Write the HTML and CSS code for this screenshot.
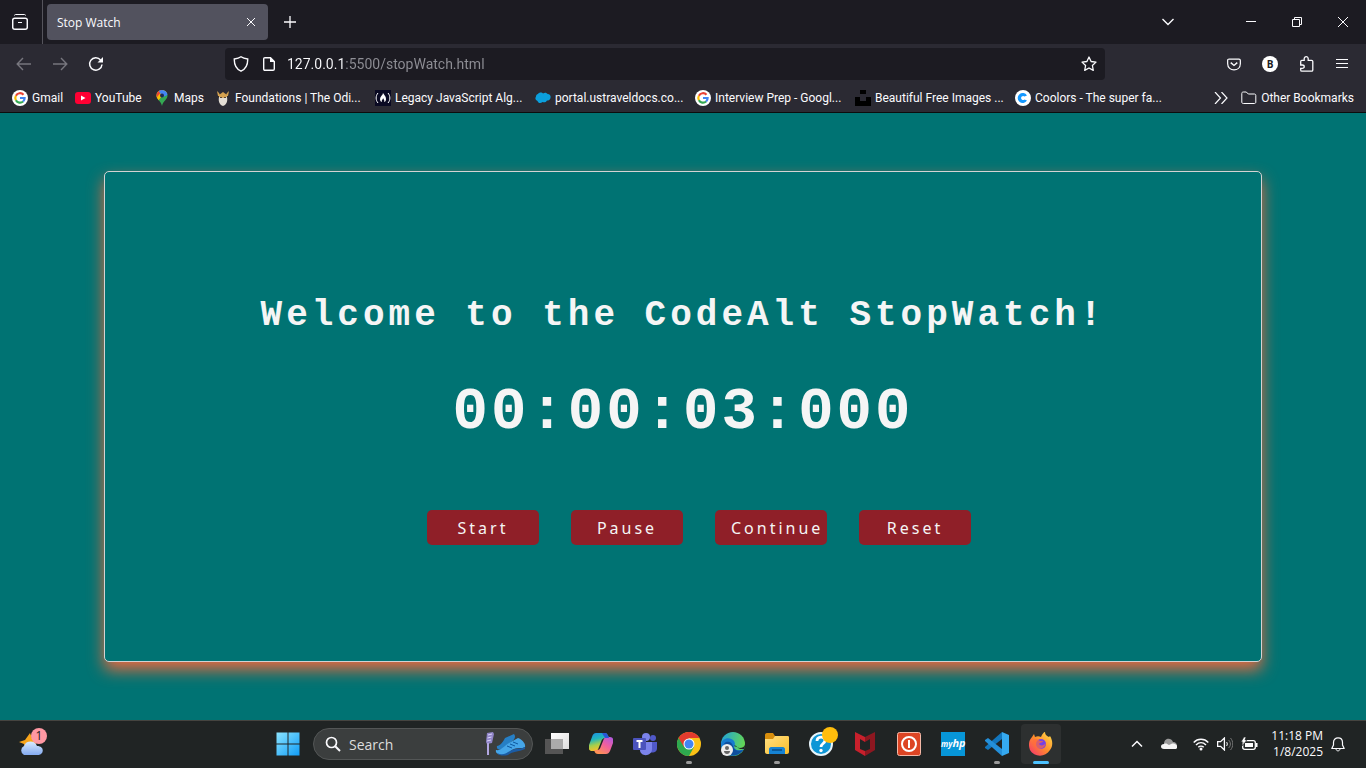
FILE: index.html
```html
<!DOCTYPE html>
<html lang="en">
<head>
<meta charset="utf-8">
<title>Stop Watch</title>
<link rel="stylesheet" href="styles.css">
</head>
<body>
<div class="screen">
  <header class="browser">
    <div class="tabbar">
      <button class="history-btn" aria-label="Recent browsing"><svg width="16" height="16" viewBox="0 0 16 16" class="line"><path d="M2.500 1.500c0-.7.5-1 1-1h9c.5 0 1 .3 1 1"/><rect x="0.7" y="4.200" width="14.600" height="11" rx="2" stroke-width="1.500"/><path d="M6 8.500h4"/></svg></button>
      <div class="tab"><span class="tab-title">Stop Watch</span><button class="tab-close" aria-label="Close tab"><svg width="10" height="10" viewBox="0 0 10 10" class="line"><path d="M1 1l8 8M9 1l-8 8"/></svg></button></div>
      <button class="cell" aria-label="New tab"><svg width="12" height="12" viewBox="0 0 12 12" class="line"><path d="M6 0v12M0 6h12" stroke-width="1.300"/></svg></button>
      <div class="window-controls">
        <button class="cell list-tabs" aria-label="List all tabs"><svg width="12" height="8" viewBox="0 0 12 8" class="line"><path d="M.5 1L6 6.500 11.500 1" stroke-width="1.400"/></svg></button>
        <button class="win-btn" aria-label="Minimize"><svg width="10" height="10" viewBox="0 0 10 10" class="line"><path d="M0 4.500h10"/></svg></button>
        <button class="win-btn" aria-label="Restore"><svg width="10" height="10" viewBox="0 0 10 10" class="line"><path d="M.5 2.500h7v7h-7zM2.500 2.500v-2h7v7h-2"/></svg></button>
        <button class="win-btn" aria-label="Close"><svg width="10" height="10" viewBox="0 0 10 10" class="line"><path d="M0 0l10 10M10 0L0 10"/></svg></button>
      </div>
    </div>
    <nav class="toolbar">
      <button class="cell dim" aria-label="Back"><svg width="16" height="14" viewBox="0 0 16 14" class="line"><path d="M15 7H1.500M7 1L1.200 7 7 13" stroke-width="1.400"/></svg></button>
      <button class="cell dim" aria-label="Forward"><svg width="16" height="14" viewBox="0 0 16 14" class="line"><path d="M1 7h13.500M9 1l5.800 6L9 13" stroke-width="1.400"/></svg></button>
      <button class="cell" aria-label="Reload"><svg width="16" height="16" viewBox="0 0 16 16" class="line"><path d="M14 8.500A6.200 6.200 0 1 1 12.600 4" stroke-width="1.500"/><path d="M15 1v5.500H9.500z" fill="currentColor" stroke="none"/></svg></button>
      <div class="urlbar">
        <svg width="16" height="16" viewBox="0 0 16 16" class="line"><path d="M8 .8c2 1.600 4.200 2 6.700 2.200.2 5.600-1.700 10-6.700 12.200C3 13 1.100 8.600 1.300 3 3.800 2.800 6 2.400 8 .8z" stroke-width="1.400"/></svg>
        <svg width="12" height="14" viewBox="0 0 12 14" class="line"><path d="M2 .7h5.500l3.800 3.800V12c0 .8-.4 1.300-1.300 1.300H2c-.9 0-1.300-.5-1.300-1.300V2C.7 1.200 1.100.7 2 .7z" stroke-width="1.400"/><path d="M7 0l5 5H7z" fill="currentColor" stroke="none"/></svg>
        <input class="url" type="text" aria-label="Address" value="127.0.0.1:5500/stopWatch.html">
        <button class="star" aria-label="Bookmark this page"><svg width="16" height="16" viewBox="0 0 16 16" class="line"><path d="M8 1l2.100 4.500 4.900.6-3.600 3.400.9 4.900L8 12l-4.300 2.400.9-4.900L1 6.100l4.900-.6z" stroke-width="1.300" stroke-linejoin="round"/></svg></button>
      </div>
      <button class="cell" aria-label="Save to Pocket"><svg width="14" height="13" viewBox="0 0 15 13" class="line"><path d="M2.200.7h10.600c.9 0 1.500.5 1.500 1.400v3.600c0 8.800-13.600 8.800-13.600 0V2.100C.7 1.200 1.300.7 2.200.7z" stroke-width="1.300"/><path d="M4 4.500l3.500 3 3.500-3" stroke-width="1.500"/></svg></button>
      <button class="cell" aria-label="Account"><span class="avatar">B</span></button>
      <button class="cell" aria-label="Extensions"><svg width="15" height="16" viewBox="0 0 15 16" class="line"><path d="M1.700 9V5.600c0-.8.300-1.200 1.100-1.200h2.400V2.800c0-2.800 4-2.800 4 0v1.600h3.400c.8 0 1.200.4 1.200 1.200V14c0 .8-.4 1.200-1.200 1.200H2.800c-.8 0-1.100-.4-1.100-1.200v-1.600h1.500c2.700 0 2.700-3.400 0-3.400z" stroke-width="1.300"/></svg></button>
      <button class="cell" aria-label="Menu"><svg width="12" height="12" viewBox="0 0 12 12" class="line"><path d="M0 1.500h12M0 5.500h12M0 9.500h12" stroke-width="1.200"/></svg></button>
    </nav>
    <nav class="bookmarks">
      <a class="bm gmail" href="#"><svg width="16" height="16" viewBox="0 0 16 16"><use href="#google"/></svg>Gmail</a>
      <a class="bm youtube" href="#"><svg width="16" height="16" viewBox="0 0 16 16"><rect y="2" width="16" height="12" rx="3" fill="#f03"/><path d="M6 5.500v5L10.500 8z" fill="#fff"/></svg>YouTube</a>
      <a class="bm maps" href="#"><svg width="16" height="16" viewBox="0 0 16 16"><clipPath id="pin"><path d="M8 0a5.500 5.500 0 0 1 5.500 5.500C13.500 9.500 9 11 8 16 7 11 2.500 9.500 2.500 5.500A5.500 5.500 0 0 1 8 0z"/></clipPath><g clip-path="url(#pin)"><path d="M0 0h16v16H0z" fill="#34a853"/><path d="M0 0h16L8 6 4 11H0z" fill="#fbbc04"/><path d="M0 0h9L3 7H0z" fill="#ea4335"/><path d="M4 0h12v4L9 7 6 3z" fill="#4285f4"/></g><circle cx="8" cy="5.500" r="2" fill="#202b50"/></svg>Maps</a>
      <a class="bm" href="#"><svg width="16" height="16" viewBox="0 0 16 16"><path d="M2 1l1 5 10 0 1-5-2 2-1 2H5L4 3z" fill="#d5a250"/><path d="M4 5l4-3 4 3v5H4z" fill="#d5a250"/><path d="M4 7l4 1 4-1c1 5-1 8-4 9-3-1-5-4-4-9z" fill="#e3ddd4"/><path d="M5 7h2v1H5zM9 7h2v1H9z" fill="#574536"/></svg>Foundations | The Odi...</a>
      <a class="bm" href="#"><svg width="16" height="16" viewBox="0 0 16 16"><path fill="#0a0a23" d="M0 0h16v16H0z"/><path d="M3 3C.5 6 .5 10 3 13M13 3c2.500 3 2.500 7 0 10" fill="none" stroke="#fff"/><path d="M8 3c0 2-3 3.500-3 6 0 2 1 3 2 3-1-2 1-2 1-4 1 2 2 3 1 4 1.500 0 2-1.500 2-3 0-3-2-4-3-6z" fill="#fff"/></svg>Legacy JavaScript Alg...</a>
      <a class="bm" href="#"><svg width="16" height="16" viewBox="0 0 16 16"><path d="M3 4c1-2 4-2 5-.5C10 2 12 3 12.500 4 15 4 16 6 15.500 8c-.5 2-2 2.500-3.500 2.500-1 2-3 2-4.500 1.500-2 2-4.500 1-5-1C0 10 0 8 1 6.500 1 5 2 4 3 4z" fill="#0b9fdd"/></svg>portal.ustraveldocs.co...</a>
      <a class="bm" href="#"><svg width="16" height="16" viewBox="0 0 16 16"><use href="#google"/></svg>Interview Prep - Googl...</a>
      <a class="bm" href="#"><svg width="16" height="16" viewBox="0 0 16 16"><path d="M5 0h6v4H5zM0 7h5v4h6V7h5v9H0z"/></svg>Beautiful Free Images ...</a>
      <a class="bm" href="#"><svg width="16" height="16" viewBox="0 0 16 16"><circle cx="8" cy="8" r="8" fill="#fff"/><path d="M12 5.500A5 5 0 1 0 12 10.500L9.500 9.500A2 2 0 1 1 9.500 6.500z" fill="#1498ff"/></svg>Coolors - The super fa...</a>
      <button class="more" aria-label="More bookmarks"><svg width="14" height="12" viewBox="0 0 14 12" class="line"><path d="M1 0l5.500 6L1 12M7.500 0L13 6l-5.500 6" stroke-width="1.200"/></svg></button>
      <a class="bm other" href="#"><svg width="16" height="16" viewBox="0 0 16 16" class="line"><path d="M.8 3.500c0-1 .5-1.500 1.500-1.500h3l2 2h6c1 0 1.500.5 1.500 1.500V12c0 1-.5 1.500-1.500 1.500h-11c-1 0-1.500-.5-1.500-1.500z"/></svg>Other Bookmarks</a>
    </nav>
  </header>

  <main class="page">
    <section class="card">
      <h1 class="heading">Welcome to the CodeAlt StopWatch!</h1>
      <div class="time">00:00:03:000</div>
      <div class="buttons">
        <button class="btn">Start</button>
        <button class="btn">Pause</button>
        <button class="btn">Continue</button>
        <button class="btn">Reset</button>
      </div>
    </section>
  </main>

  <footer class="taskbar">
    <div class="widgets"><button class="weather" aria-label="Weather"><svg width="24" height="24" viewBox="0 0 24 24"><path d="M11 1l2 5 6 1-4 8H6l-1-3-5-2 6-2z" fill="#f8a51b"/><path d="M5 23a5 5 0 0 1 0-9 7 7 0 0 1 13 0c8 0 7 9 1 9z" fill="url(#cloud)"/></svg><span class="badge">1</span></button></div>
    <button class="task" aria-label="Start menu"><svg width="24" height="24" viewBox="0 0 24 24"><path d="M.5.500h11v11H.5zM12.500.500h11v11h-11zM.5 12.500h11v11H.5zM12.500 12.500h11v11h-11z" fill="url(#win)"/></svg></button>
    <div class="search">
      <svg width="16" height="16" viewBox="0 0 16 16" class="line"><circle cx="6.500" cy="6.500" r="5" stroke-width="1.700"/><path d="M10.200 10.200L15 15" stroke-width="2"/></svg>
      <input class="search-input" type="text" aria-label="Search" placeholder="Search">
      <svg width="42" height="24" viewBox="0 0 42 24"><path d="M3 1l6-1 1 2-2 9-5 1-1-2z" fill="#9186c8"/><path d="M4 3l4-1M3.500 6l4-1M3 9l4-1" stroke="#d9d2fa"/><path d="M4 11v12" stroke="#b3a8e2" stroke-width="2"/><path d="M13 14c3 0 6-4 8-8l9-4c2 2 1 6-3 8l-7 6c-3 3-8 2-7-2z" fill="#267fc5"/><path d="M12 18c5 1 8-4 13-7l9-5c4 1 8 6 7 9-3 2-7 0-11 2-4 1-6 6-11 6-4 0-8-2-7-5z" fill="#45a6e9"/><path d="M13 21c8 4 12-3 18-4 4-1 7 0 10-2v2c-7 3-12 2-17 6-4 1-9 1-11-2z" fill="#1b5ca5"/><path d="M23 14l5 2M26 12l5 2M29 10l5 2" stroke="#0c589e"/></svg>
    </div>
    <button class="task" aria-label="Task view"><svg width="24" height="24" viewBox="0 0 24 24"><path d="M6 1h18v16H6z" fill="url(#view)"/><path d="M0 7h18v15H0z" fill="#555"/><path d="M6 7h12v10H6z" fill="#aaa"/></svg></button>
    <button class="task" aria-label="Copilot"><svg width="24" height="24" viewBox="0 0 24 24"><path d="M7 1h9c2 0 3 2 4 5h-4c-2 0-3 1-4 4l-2 5c-1 3-2 4-4 4H3c-3 0-4-3-3-6l3-8c1-3 2-4 4-4z" fill="url(#cop1)"/><path d="M17 22H9c-2 0-3-1-4-4h3c2 0 3-1 4-4l2-5c1-3 2-4 4-4h3c3 0 4 3 3 6l-3 8c-1 2-2 3-4 3z" fill="url(#cop2)"/><path d="M13 1h3c2 0 3 2 4 5h-4z" fill="#2b56d8"/></svg></button>
    <button class="task" aria-label="Teams"><svg width="24" height="24" viewBox="0 0 24 24"><circle cx="13" cy="5" r="4" fill="#7b83eb"/><circle cx="20" cy="6" r="3" fill="#5059c9"/><path d="M17 10h7v6c0 5-5 5-7 4z" fill="#5059c9"/><path d="M7 10h12v7c0 8-12 8-12 1z" fill="#7b83eb"/><rect y="6" width="13" height="12" rx="1" fill="#4b53bc"/><path d="M3.500 9h6M6.500 9v7" stroke="#fff" stroke-width="2"/></svg></button>
    <button class="task open" aria-label="Chrome"><svg width="24" height="24" viewBox="0 0 24 24"><circle cx="12" cy="12" r="12" fill="#fbc116"/><path d="M12 12L1.600 6A12 12 0 0 0 12 24l5-9z" fill="#2da94f"/><path d="M1.600 6A12 12 0 0 1 22.400 6H12L7 15z" fill="#e33b2e"/><circle cx="12" cy="12" r="5.500" fill="#fff"/><circle cx="12" cy="12" r="4.500" fill="#4285f4"/></svg></button>
    <button class="task" aria-label="Edge"><svg width="24" height="24" viewBox="0 0 24 24"><circle cx="12" cy="12" r="12" fill="url(#edge)"/><path d="M0 12C1 6 9 4 13 9c2 3 0 6 0 6 1 4 6 4 10 2-4 7-12 8-17 5C2 20 0 16 0 12z" fill="#167bd0"/><path d="M12 14c-1-4-4-5-7-4-4 2-3 9 2 13 8 2 13-2 15-5-5 2-9 0-10-4z" fill="#0f4f9e"/><path d="M13 14c3-2 2 4 10 3 1-2 1-3 1-4-1 3-6 4-8 2z" fill="#202625"/><circle cx="6" cy="18" r="6" fill="#eee"/><circle cx="6" cy="16" r="2" fill="#666"/><path d="M3 19h6c0 4-6 4-6 0z" fill="#666"/></svg></button>
    <button class="task open" aria-label="File Explorer"><svg width="24" height="24" viewBox="0 0 24 24"><path d="M0 3c0-1 .5-2 2-2h6l2 3v6H0z" fill="#d88e0c"/><path d="M0 7h8l2-3h13c1 0 1 1 1 2v14c0 1-1 2-2 2H2c-1 0-2-1-2-2z" fill="url(#folder)"/><path d="M4 22v-5c0-1 1-2 2-2h12c1 0 2 1 2 2v5z" fill="#1683d4"/><path d="M7 18h10" stroke="#0b5a9b" stroke-width="2"/></svg></button>
    <button class="task" aria-label="Get Help"><svg width="24" height="24" viewBox="0 0 24 24"><circle cx="12" cy="12" r="11" fill="#0e96d6" stroke="#e8f5fb" stroke-width="2"/><path d="M8 9c0-5 8-5 8-.5 0 3-4 3-4 6.500" fill="none" stroke="#fff" stroke-width="2.800"/><circle cx="12" cy="18.500" r="1.700" fill="#fff"/></svg><span class="dot"></span></button>
    <button class="task" aria-label="McAfee"><svg width="24" height="24" viewBox="0 0 24 24"><path d="M2 0l10 5v5L7 7v10l5 2v5L2 18z" fill="#c8202c"/><path d="M22 0L12 5v5l5-3v10l-5 2v5l10-6z" fill="#8d1720"/></svg></button>
    <button class="task" aria-label="Power"><svg width="24" height="24" viewBox="0 0 24 24"><rect x=".5" y=".5" width="23" height="23" rx="2" fill="#dd4524" stroke="#f4b9a8"/><circle cx="12" cy="12" r="7" fill="none" stroke="#fff" stroke-width="2"/><path d="M12 8v8" stroke="#fff" stroke-width="2"/></svg></button>
    <button class="task" aria-label="myHP"><span class="myhp"><span class="my">my</span>hp</span></button>
    <button class="task open" aria-label="Visual Studio Code"><svg width="24" height="24" viewBox="0 0 24 24"><path d="M17 0v7L3 18l-3-2v-1z" fill="#1276bd"/><path d="M17 24v-7L3 6 0 8v1z" fill="#2490da"/><path d="M17 0l7 3v18l-7 3z" fill="#35a9ef"/></svg></button>
    <button class="task open active" aria-label="Firefox"><svg width="24" height="24" viewBox="0 0 24 24"><path d="M3 5l2-3 1 3c2-1 4-1 6 0 1-3 3-5 4-5 0 3 2 4 4 5l1-1c3 5 3 10 0 14-5 8-16 7-20 0C-1 13 0 8 3 5z" fill="url(#fox)"/><circle cx="12" cy="12" r="5" fill="#7542e5"/><path d="M4 8c3-2 5-1 7 1h3c0 2-3 1-4 3 1 2 5 2 7-1-1 5-6 7-10 5-3-2-4-4-3-8z" fill="#ff6b3d" opacity=".7"/></svg></button>
    <div class="tray">
      <button class="tray-btn" aria-label="Show hidden icons"><svg width="12" height="8" viewBox="0 0 12 8" class="line"><path d="M1 6.500l5-5 5 5" stroke-width="1.500"/></svg></button>
      <button class="tray-btn" aria-label="OneDrive"><svg width="16" height="12" viewBox="0 0 16 12"><path d="M3 6c0-6 7-7 9-2 3 0 4 2 4 4L8 9z" fill="#999"/><path d="M3 11c-4 0-4-5 0-5 2-1 3 0 5 1 2-1 4-2 6-1 3 1 3 5 0 5z" fill="#f5f5f5"/></svg></button>
      <button class="status" aria-label="Network, volume and battery">
        <svg width="16" height="13" viewBox="0 0 16 13" class="line"><path d="M.7 4.500c4-4.200 10.600-4.200 14.600 0M3 7c3-3 7-3 10 0M5.300 9.300c1.500-1.500 3.900-1.500 5.400 0" stroke-width="1.500"/><circle cx="8" cy="11" r="1.500" fill="currentColor" stroke="none"/></svg>
        <svg width="16" height="14" viewBox="0 0 16 14" class="line"><path d="M.6 4.600h3L7.400 1v12L3.600 9.400h-3z" stroke-width="1.300"/><path d="M9.500 5c1 1 1 3 0 4"/><path d="M11.500 3c2.500 2 2.500 6 0 8M13.500 1c3 3.500 3 8.500 0 12" stroke="#777"/></svg>
        <svg width="17" height="14" viewBox="0 0 17 14"><rect x="1.700" y="3.700" width="12.600" height="8.600" rx="2" fill="none" stroke="#fff" stroke-width="1.300"/><path d="M4 6h8v4H4zM15 6h1.500v4H15z" fill="#fff"/><path d="M3 0L0 5h2l-1 4 5-6H4l1-3z" fill="#fff" stroke="#202424" stroke-width=".6"/></svg>
      </button>
      <button class="clock"><span>11:18 PM</span><span>1/8/2025</span></button>
      <button class="bell" aria-label="Notifications"><svg width="14" height="15" viewBox="0 0 14 15" class="line"><path d="M2.500 8V5.500c0-6.300 9-6.300 9 0V8l1.700 3.500H.8z" stroke-width="1.200" stroke-linejoin="round"/><path d="M5 12c.3 2.500 3.700 2.500 4 0"/></svg></button>
    </div>
  </footer>
</div>
<svg class="defs" width="0" height="0" aria-hidden="true">
  <defs>
    <symbol id="google" viewBox="0 0 16 16"><circle cx="8" cy="8" r="8" fill="#fff"/><g fill="none" stroke-width="2.200"><path d="M11.500 4.700A4.700 4.700 0 0 0 3.900 5.700" stroke="#ea4335"/><path d="M3.900 5.700a4.700 4.700 0 0 0 0 4.600" stroke="#fbbc05"/><path d="M3.900 10.300a4.700 4.700 0 0 0 7.200 1.200" stroke="#34a853"/><path d="M11.100 11.500A4.700 4.700 0 0 0 12.600 8H8" stroke="#4285f4"/></g></symbol>
    <linearGradient id="win" x2="1" y2="1"><stop stop-color="#8be4ff"/><stop offset="1" stop-color="#109cf6"/></linearGradient>
    <linearGradient id="cloud" x2="0" y2="1"><stop stop-color="#d8eaff"/><stop offset="1" stop-color="#83aaf0"/></linearGradient>
    <linearGradient id="view" x2="1" y2="1"><stop stop-color="#fff"/><stop offset="1" stop-color="#ddd"/></linearGradient>
    <linearGradient id="cop1" x2=".3" y2="1"><stop stop-color="#1b8de8"/><stop offset=".4" stop-color="#21b6bb"/><stop offset=".7" stop-color="#a6cf4b"/><stop offset="1" stop-color="#f8c02a"/></linearGradient>
    <linearGradient id="cop2" x1="1" x2=".3" y2="1"><stop stop-color="#a95ae9"/><stop offset=".5" stop-color="#ef5f9f"/><stop offset="1" stop-color="#ff9253"/></linearGradient>
    <linearGradient id="edge" x2="1" y2=".3"><stop stop-color="#1ea1df"/><stop offset="1" stop-color="#61d557"/></linearGradient>
    <linearGradient id="folder" x2="1" y2="1"><stop stop-color="#ffe083"/><stop offset="1" stop-color="#fbbd2a"/></linearGradient>
    <linearGradient id="fox" x1="1" x2="0" y2="1"><stop stop-color="#ffe24a"/><stop offset=".5" stop-color="#ff8b2c"/><stop offset="1" stop-color="#f52d73"/></linearGradient>
  </defs>
</svg>
</body>
</html>
```
FILE: styles.css
```css
* { box-sizing: border-box; }
body { margin: 0; font-family: "Open Sans", "Noto Sans", sans-serif; font-size: 12px; color: #fbfbfe; }
button { padding: 0; border: 0; background: none; color: inherit; font: inherit; display: flex; align-items: center; justify-content: center; flex: none; }
input { border: 0; padding: 0; outline: 0; background: none; font: inherit; min-width: 0; flex: 1; }
a { color: inherit; text-decoration: none; }
svg { display: block; flex: none; }
.line { fill: none; stroke: currentColor; }
.defs { position: absolute; }
.screen { min-height: 100vh; display: flex; flex-direction: column; }

.browser { background: #2b2a33; border-bottom: 1px solid #0c0c0d; }
.tabbar { display: flex; align-items: center; height: 44px; background: #1c1b22; }
.history-btn { width: 43px; height: 44px; padding-right: 3px; border-right: 1px solid #55545c; }
.tab { display: flex; align-items: center; justify-content: space-between; width: 221px; height: 36px; margin-left: 4px; padding: 0 10px; border-radius: 4px; background: #52525e; }
.tab-close { width: 14px; height: 20px; }
.tab + .cell { margin-left: 4px; }
.cell { width: 36px; height: 32px; }
.window-controls { display: flex; align-items: center; margin-left: auto; }
.list-tabs { margin-right: 42px; }
.win-btn { width: 46px; height: 32px; }

.toolbar { display: flex; align-items: center; height: 40px; padding: 0 6px; }
.dim { color: #77767e; }
.urlbar { display: flex; align-items: center; flex: 1; height: 32px; margin: 0 111px; padding: 0 8px; border-radius: 4px; background: #1c1b22; }
.urlbar svg + svg { margin: 0 12px 0 14px; }
.url { font-family: Roboto, sans-serif; font-size: 14px; color: transparent; background: linear-gradient(90deg, #fbfbfe 58px, #8f8f96 58px); -webkit-background-clip: text; background-clip: text; }
.avatar { width: 16px; height: 16px; border-radius: 50%; background: #fff; color: #1c1b22; font-size: 10px; font-weight: 700; line-height: 16px; text-align: center; }

.bookmarks { display: flex; align-items: center; height: 28px; padding: 0 12px; gap: 12px; font-family: Roboto, sans-serif; }
.bm { display: flex; align-items: center; gap: 4px; width: 148px; height: 24px; white-space: nowrap; }
.gmail { width: 51px; }
.youtube { width: 67px; }
.maps { width: 49px; }
.more { width: 16px; height: 24px; margin-left: auto; }
.other { width: auto; }

.page { flex: 1; display: flex; padding: 58px 104px; background: #007373; }
.card { flex: 1; display: flex; flex-direction: column; align-items: center; justify-content: center; padding-top: 4px; border: 1px solid #d3d3d3; border-radius: 5px; box-shadow: 0 8px 16px #e6693f; background: #007373; color: #f5f5f5; }
.heading { margin: 0 0 41px; font: 700 36px/48px "Courier New", "Liberation Mono", monospace; letter-spacing: 4px; text-align: center; }
.time { margin-bottom: 65px; font: 700 59px/64px "Courier New", "Liberation Mono", monospace; letter-spacing: 3px; }
.buttons { display: flex; gap: 32px; padding-left: 32px; }
.btn { justify-content: safe center; width: 112px; height: 35px; padding: 0 16px; border-radius: 5px; background: #8f1f28; font-family: "Noto Sans", sans-serif; font-size: 16px; letter-spacing: 3px; }

.taskbar { display: flex; align-items: center; height: 48px; box-shadow: inset 0 1px #454440; background: #202424; }
.widgets { width: 266px; padding-left: 19px; }
.weather { position: relative; width: 28px; height: 32px; justify-content: flex-start; }
.badge { position: absolute; top: 0; right: 0; width: 16px; height: 16px; border-radius: 50%; background: #ff98a3; color: #222; line-height: 16px; }
.task { position: relative; width: 44px; height: 40px; }
.open::after { content: ""; position: absolute; left: 50%; bottom: 0; width: 6px; height: 3px; margin-left: -3px; border-radius: 2px; background: #9b9b9b; }
.active { width: 40px; margin: 0 2px; border-radius: 4px; background: #2d3030; }
.active::after { width: 16px; margin-left: -8px; background: #4cc2ff; }
.dot { position: absolute; top: 3px; right: 5px; width: 16px; height: 16px; border-radius: 50%; background: #ffbd0c; }
.myhp { width: 24px; height: 24px; background: #0796d8; font-size: 11px; font-weight: 700; font-style: italic; line-height: 22px; text-align: center; }
.my { font-size: 8px; }
.search { display: flex; align-items: center; width: 220px; height: 32px; margin: 0 2px 0 3px; padding: 0 6px 0 11px; border: 1px solid #535656; border-radius: 16px; background: #3b3e3e; }
.search-input { margin-left: 8px; font-size: 14px; color: #ddd; }
.search-input::placeholder { color: #ddd; opacity: 1; }
.tray { display: flex; align-items: center; margin-left: auto; padding-right: 21px; }
.tray-btn { width: 32px; height: 40px; }
.status { gap: 8px; height: 40px; margin: 0 13px 0 8px; }
.clock { flex-direction: column; align-items: flex-end; line-height: 16px; }
.bell { margin-left: 8px; }
```
